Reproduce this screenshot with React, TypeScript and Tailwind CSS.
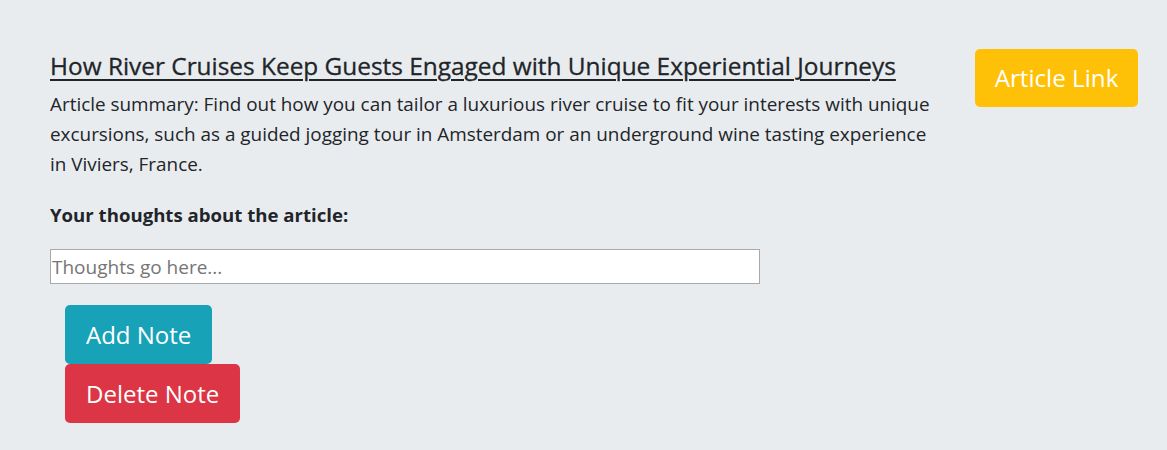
const font = { fontFamily: '"Open Sans", "Noto Sans", sans-serif' }

export default function App() {
  return (
    <div
      className="min-h-[450px] w-full bg-[#e9ecef] pl-[50px] pr-[29px] pt-[46px] text-[#212529]"
      style={font}
    >
      <div className="flex items-start justify-between">
        <div className="w-[900px]">
          <h3 className="mt-[5px] text-[24.4px] font-medium leading-[1.2] underline underline-offset-[4px] decoration-[2px] [-webkit-text-stroke:0.3px_#212529]">
            How River Cruises Keep Guests Engaged with Unique Experiential Journeys
          </h3>
          <p className="mt-[9px] w-[890px] text-[18.9px] leading-[30px]">
            Article summary: Find out how you can tailor a luxurious river cruise to fit your interests with unique
            excursions, such as a guided jogging tour in Amsterdam or an underground wine tasting experience in
            Viviers, France.
          </p>
          <p className="mt-[24px] text-[18.6px] font-bold leading-[24px]">Your thoughts about the article:</p>
          <input
            type="text"
            placeholder="Thoughts go here..."
            className="mt-[22px] block h-[35px] w-[710px] border border-[#a9a9a9] bg-white px-[1px] text-[19px] placeholder:text-[#757575] outline-none"
          />
          <div className="ml-[15px] mt-[21px] flex flex-col items-start">
            <button className="h-[59px] rounded-[5px] bg-[#17a2b8] px-[21px] text-[24px] text-white">
              Add Note
            </button>
            <button className="h-[59px] rounded-[5px] bg-[#dc3545] px-[21px] text-[24px] text-white">
              Delete Note
            </button>
          </div>
        </div>
        <button className="mt-[3px] h-[58px] w-[163px] rounded-[5px] bg-[#ffc107] text-[24.2px] text-white">
          Article Link
        </button>
      </div>
    </div>
  )
}
